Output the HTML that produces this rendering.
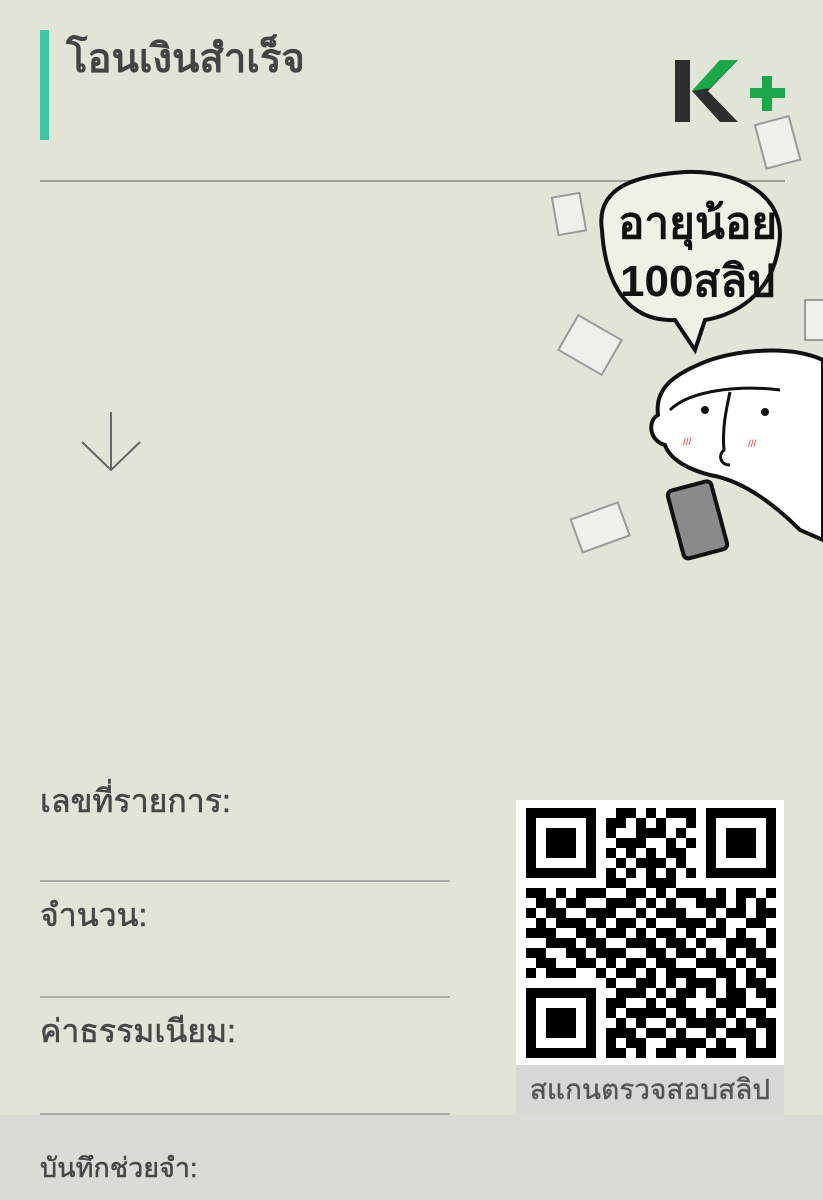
<!DOCTYPE html>
<html><head><meta charset="utf-8"><style>
body{margin:0;width:823px;height:1200px;background:#e0e5d8;position:relative;overflow:hidden;font-family:"Liberation Sans","Noto Sans CJK SC","WenQuanYi Zen Hei",sans-serif;color:#474747}
.a{position:absolute}
.lbl{font-size:32px;left:40px;-webkit-text-stroke:0.6px #474747}
.ln{left:40px;width:410px;height:2px;background:#a9aca6}
</style></head><body>
<div class="a" style="left:40px;top:30px;width:9px;height:110px;background:#3ec7a6"></div>
<div class="a" style="left:66px;top:26px;font-size:40px;color:#444;font-weight:bold">โอนเงินสำเร็จ</div>
<div class="a" style="left:40px;top:180px;width:745px;height:2px;background:#9c9e9a"></div>
<svg class="a" style="left:670px;top:58px" width="120" height="70"><rect x="5" y="2" width="15" height="62" fill="#2e2e2e"/><path d="M22 33 L50 2 L68 2 L38 33 L68 64 L50 64 Z" fill="#2e2e2e"/><path d="M22 33 L50 2 L68 2 L40 30 Z" fill="#1aa84a"/><rect x="80" y="30" width="35" height="10" fill="#1aa84a"/><rect x="92" y="18" width="10" height="35" fill="#1aa84a"/></svg>
<svg class="a" style="left:540px;top:110px" width="283" height="460">
<g fill="#eef0ea" stroke="#9a9a9a" stroke-width="2"><rect x="220" y="10" width="35" height="45" transform="rotate(-15 237 32)"/><rect x="15" y="85" width="28" height="38" transform="rotate(-10 29 104)"/><rect x="25" y="215" width="50" height="40" transform="rotate(30 50 235)"/><rect x="35" y="400" width="50" height="35" transform="rotate(-20 60 417)"/><rect x="265" y="190" width="30" height="40"/></g>
<path d="M62 120 C55 75 100 65 145 62 C205 60 250 90 238 140 C230 185 195 205 165 210 L155 240 L135 210 C85 212 65 170 62 120Z" fill="#eef2e6" stroke="#111" stroke-width="4"/>
<text x="78" y="128" font-size="44" fill="#111" font-weight="bold">อายุน้อย</text>
<text x="80" y="186" font-size="44" fill="#111" font-weight="bold">100สลิป</text>
<path d="M283 250 C250 235 200 240 170 250 C130 265 115 280 118 305 C108 310 108 330 125 335 C130 350 150 360 170 365 C200 370 230 390 260 420 L283 430Z" fill="#fff" stroke="#111" stroke-width="4"/>
<path d="M130 300 C150 280 200 275 240 280" fill="none" stroke="#111" stroke-width="3"/>
<path d="M190 282 C186 300 182 320 184 340 C178 345 180 355 190 355" fill="none" stroke="#111" stroke-width="3"/>
<circle cx="165" cy="300" r="4" fill="#111"/><circle cx="225" cy="302" r="4" fill="#111"/>
<text x="143" y="335" font-size="10" fill="#e33">///</text><text x="208" y="337" font-size="10" fill="#e33">///</text>
<rect x="135" y="375" width="45" height="70" rx="5" fill="#8a8a8a" stroke="#111" stroke-width="4" transform="rotate(-15 157 410)"/>
</svg>
<svg class="a" style="left:80px;top:412px" width="62" height="60"><path d="M31 0 V58 M2 30 L31 58 L60 30" fill="none" stroke="#666" stroke-width="2"/></svg>
<div class="a lbl" style="top:776px">เลขที่รายการ:</div>
<div class="a ln" style="top:880px"></div>
<div class="a lbl" style="top:890px">จำนวน:</div>
<div class="a ln" style="top:996px"></div>
<div class="a lbl" style="top:1006px">ค่าธรรมเนียม:</div>
<div class="a ln" style="top:1113px"></div>
<div class="a" style="left:0;top:1115px;width:823px;height:85px;background:#d8dcd5"></div>
<div class="a" style="left:40px;top:1146px;font-size:27px;-webkit-text-stroke:0.5px #474747">บันทึกช่วยจำ:</div>
<div class="a" style="left:516px;top:800px;width:268px;height:265px;background:#fff"></div>
<div class="a" style="left:516px;top:1065px;width:268px;height:50px;background:#d6d8d3;font-size:28px;text-align:center;line-height:50px;color:#555;-webkit-text-stroke:0.4px #555">สแกนตรวจสอบสลิป</div>
<svg class="a" style="left:526px;top:808px" width="250" height="250" id="q"></svg>
<script>
var rows=["1111111001101011101111111","1000001011010100101000001","1011101010011101001011101","1011101001110010101011101","1011101010101011001011101","1000001001011101001000001","1111111010101010101111111","0000000011001110000000000","1101011100110101110101101","0110110011101010011101010","1011001110010111001011011","0101110101101001110100110","1110011011010110101101001","0011101100111011010011101","1100110111001101101010110","0110011010110110011101011","1011100101101011100110101","0000000010011010111010110","1111111001110101101011011","1000001011001011000111001","1011101010111101101010110","1011101001010010111101011","1011101011101101001011101","1000001010110011110100101","1111111011010110101110111"];
var s="";rows.forEach(function(r,y){for(var x=0;x<25;x++)if(r[x]=="1")s+='<rect x="'+x*10+'" y="'+y*10+'" width="10" height="10"/>';});
document.getElementById("q").innerHTML='<g fill="#000">'+s+'</g>';
</script>
</body></html>
